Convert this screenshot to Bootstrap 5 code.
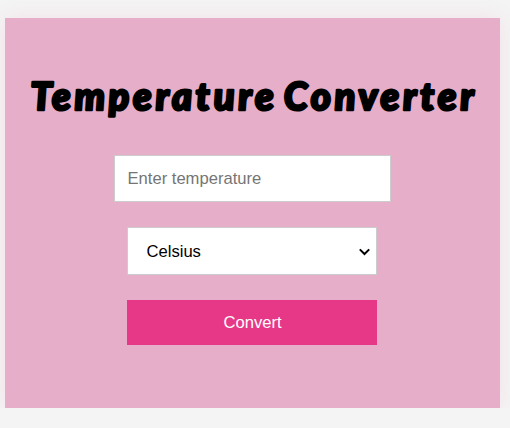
<!DOCTYPE html>
<html lang="en">
<head>
<meta charset="utf-8">
<meta name="viewport" content="width=device-width, initial-scale=1">
<title>Temperature Converter</title>
<link rel="stylesheet" href="https://cdn.jsdelivr.net/npm/bootstrap@5.3.0/dist/css/bootstrap.min.css">
<style>
body{background:#f4f4f4;font-family:"Liberation Sans",Arial,sans-serif;overflow:hidden}
.converter{width:495px;height:390px;margin:18px 0 0 5px;padding-top:48px;background:#e6aec8;box-shadow:0 0 20px rgba(232,56,136,.1)}
.converter-title{margin:0;height:61px}
.converter-title svg{display:block;width:495px;height:61px;overflow:visible}
.converter-title text{font:italic 900 38.5px Lato,"Open Sans",sans-serif;fill:#000;stroke:#000;stroke-width:2.6px;stroke-linejoin:round}
.temp-input,.unit-select,.convert-btn{border-radius:0;font-size:16.6px;line-height:20px}
.temp-input{width:277px;height:47px;padding:0 12px 0 13px;border:1px solid #ccc;margin-top:28px;margin-right:1px}
.temp-input::placeholder{color:#757575;opacity:1}
.unit-select{width:250px;height:48px;padding:2px 18px 0 18.5px;border:1px solid #ccc;margin-top:25px;margin-right:1px;color:#000;background-position:right 5px center;background-size:13px 13px;background-image:url("data:image/svg+xml,%3csvg xmlns='http://www.w3.org/2000/svg' viewBox='0 0 13 13'%3e%3cpath fill='none' stroke='%23000' stroke-width='2' d='M1.8 4.4 6.5 9l4.7-4.6'/%3e%3c/svg%3e")}
.convert-btn{width:250px;height:45px;padding:0 0 0 1px;border:0;margin-top:25px;margin-right:1px;background:#e73888;color:#fff}
</style>
</head>
<body>
<main class="converter d-flex flex-column align-items-center">
<h1 class="converter-title"><svg viewBox="0 0 495 61" role="img" aria-label="Temperature Converter"><g transform="translate(0 43.6) skewX(3)"><text x="26.5" y="0" textLength="243" lengthAdjust="spacing">Temperature</text><text x="279.5" y="0" textLength="190" lengthAdjust="spacing">Converter</text></g></svg></h1>
<input class="form-control temp-input" type="text" placeholder="Enter temperature">
<select class="form-select unit-select"><option>Celsius</option><option>Fahrenheit</option></select>
<button class="btn convert-btn" type="button">Convert</button>
</main>
<script src="https://cdn.jsdelivr.net/npm/bootstrap@5.3.0/dist/js/bootstrap.bundle.min.js"></script>
</body>
</html>
